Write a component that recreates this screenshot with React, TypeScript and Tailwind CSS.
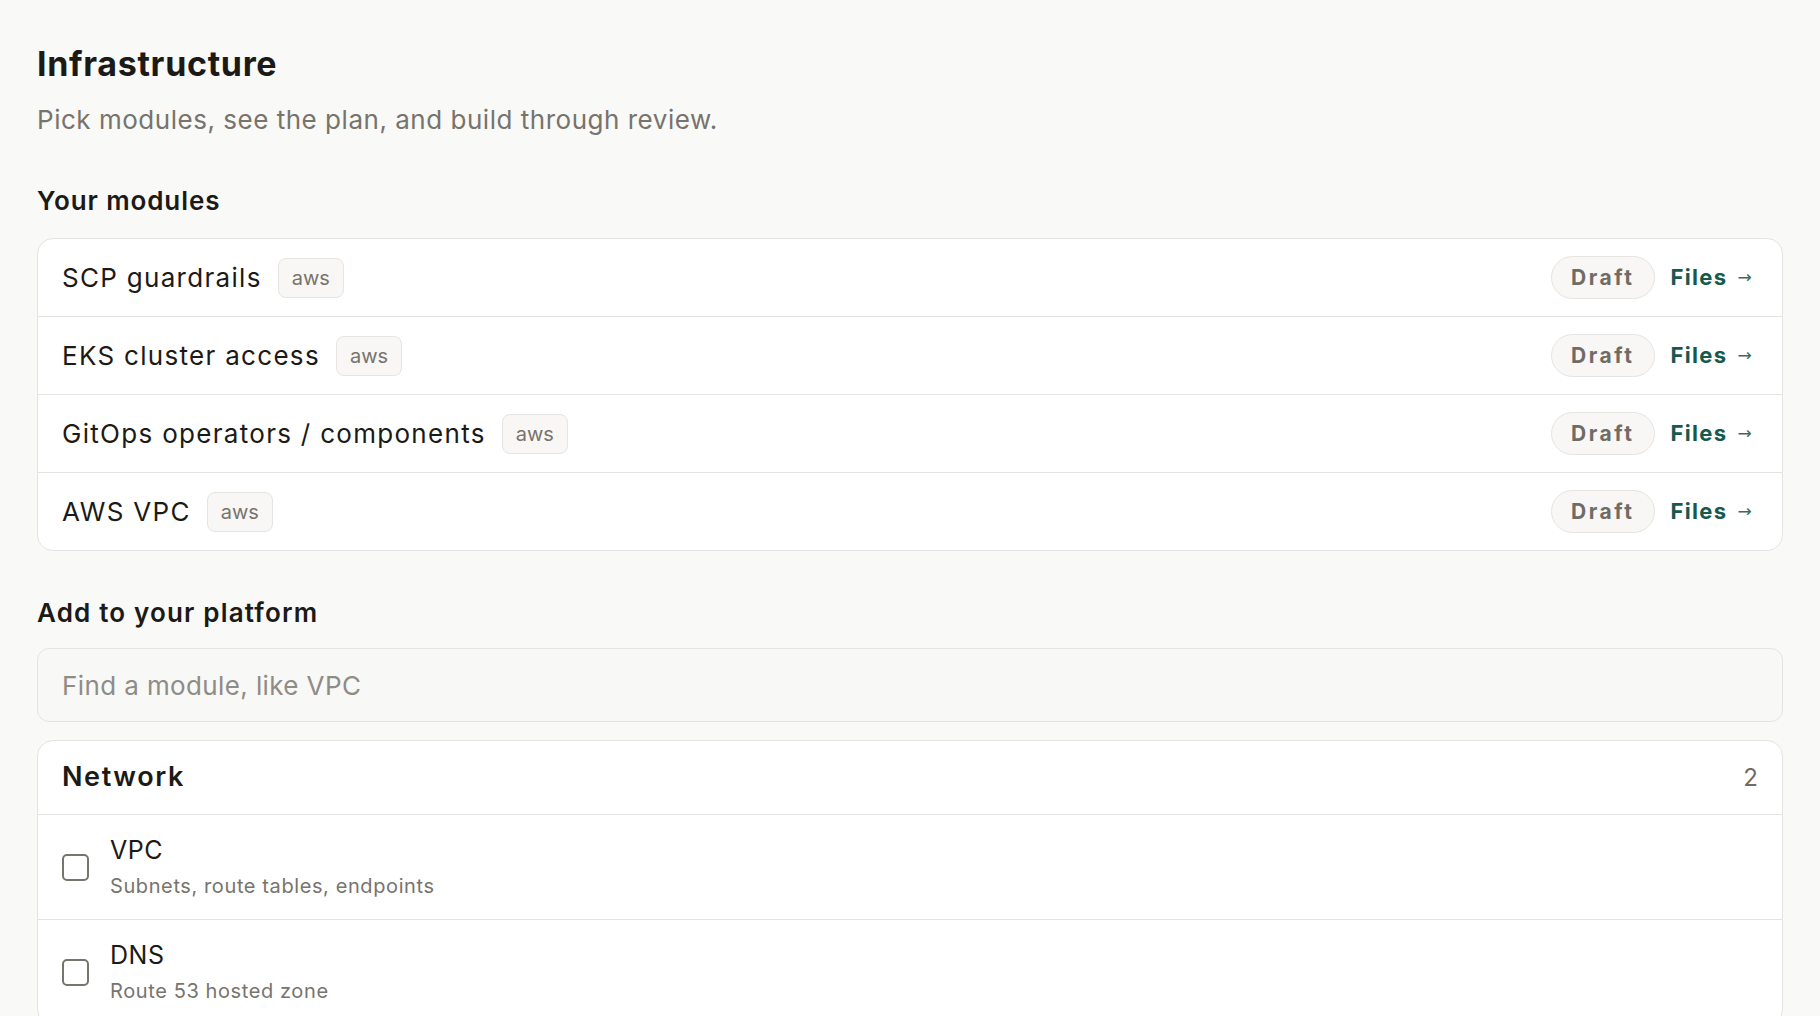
import { useState } from "react";

const modules = [
  { name: "SCP guardrails", provider: "aws" },
  { name: "EKS cluster access", provider: "aws" },
  { name: "GitOps operators / components", provider: "aws" },
  { name: "AWS VPC", provider: "aws" },
];

const networkItems = [
  { id: "vpc", name: "VPC", desc: "Subnets, route tables, endpoints" },
  { id: "dns", name: "DNS", desc: "Route 53 hosted zone" },
];

export default function App() {
  const [query, setQuery] = useState("");
  const [picked, setPicked] = useState<string[]>([]);

  const toggle = (id: string) =>
    setPicked((p) => (p.includes(id) ? p.filter((x) => x !== id) : [...p, id]));

  return (
    <div className="min-h-screen bg-[#f9f9f7] px-[37px] pt-[44px] pb-10 font-[Inter,sans-serif] text-[#1c1a17]">
      {/* Header */}
      <h1 className="text-[34px] leading-[40px] font-bold tracking-[0.02em]">
        Infrastructure
      </h1>
      <p className="mt-[20px] text-[26px] leading-[32px] tracking-[0.02em] text-[#77736d]">
        Pick modules, see the plan, and build through review.
      </p>

      {/* Your modules */}
      <h2 className="mt-[49px] text-[26px] leading-[32px] font-semibold tracking-[0.035em]">
        Your modules
      </h2>
      <div className="mt-[21px] overflow-hidden rounded-2xl border border-[#e6e4e0] bg-white">
        {modules.map((m, i) => (
          <div
            key={m.name}
            className={
              "box-content flex h-[77px] items-center px-6" +
              (i < modules.length - 1 ? " border-b border-[#e6e4e0]" : "")
            }
          >
            <span className="text-[26px] leading-[32px] tracking-[0.05em]">{m.name}</span>
            <span className="ml-4 flex h-[40px] items-center rounded-lg border border-[#e6e4e0] bg-[#f8f7f5] px-[13px] text-[20px] text-[#77736d]">
              {m.provider}
            </span>
            <div className="ml-auto mr-[5px] flex items-center gap-4">
              <span className="flex h-[43px] items-center rounded-full border border-[#e6e4e0] bg-[#f8f7f5] px-[19px] text-[21px] font-bold tracking-[0.12em] text-[#6f6b65]">
                Draft
              </span>
              <a href="#" className="flex items-center text-[22px] font-bold tracking-[0.06em] text-[#17594d]">
                Files
                <span className="ml-[10px] font-['DejaVu_Sans',sans-serif] text-[17px] font-normal text-[#3f6a61]">
                  →
                </span>
              </a>
            </div>
          </div>
        ))}
      </div>

      {/* Add to your platform */}
      <h2 className="mt-[46px] text-[26px] leading-[32px] font-semibold tracking-[0.045em]">
        Add to your platform
      </h2>
      <input
        value={query}
        onChange={(e) => setQuery(e.target.value)}
        placeholder="Find a module, like VPC"
        className="mt-[19px] block h-[74px] w-full rounded-xl border border-[#e6e4e0] bg-[#f8f8f6] px-6 text-[26px] tracking-[0.015em] outline-none placeholder:text-[#8f8b86]"
      />

      <div className="mt-[18px] overflow-hidden rounded-2xl border border-[#e6e4e0] bg-white">
        <div className="box-content flex h-[73px] items-center justify-between border-b border-[#e6e4e0] px-6">
          <span className="text-[27px] font-semibold tracking-[0.06em]">Network</span>
          <span className="text-[24px] text-[#6f6b65]">{networkItems.length}</span>
        </div>
        {networkItems.map((item, i) => (
          <label
            key={item.id}
            className={
              "box-content flex h-[104px] cursor-pointer items-center px-6" +
              (i < networkItems.length - 1 ? " border-b border-[#e6e4e0]" : "")
            }
          >
            <input
              type="checkbox"
              checked={picked.includes(item.id)}
              onChange={() => toggle(item.id)}
              className="h-[27px] w-[27px] shrink-0 appearance-none rounded-[5px] border-2 border-[#77736d] bg-white checked:bg-[#17594d]"
            />
            <div className="ml-[21px]">
              <div className="text-[25px] leading-[30px] tracking-[0.02em]">{item.name}</div>
              <div className="mt-[7px] text-[20px] leading-[28px] tracking-[0.03em] text-[#77736d]">
                {item.desc}
              </div>
            </div>
          </label>
        ))}
      </div>
    </div>
  );
}
